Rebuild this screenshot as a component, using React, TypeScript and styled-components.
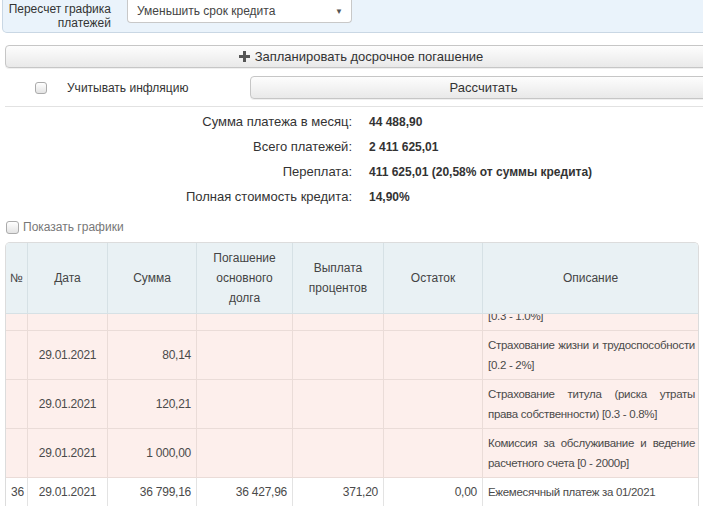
import { Fragment, ReactNode, useLayoutEffect, useRef } from 'react';
import { createGlobalStyle, styled } from 'styled-components';

const GlobalStyle = createGlobalStyle`
    html, body {
        margin: 0;
        overflow: hidden;
        background: #fff;
    }
    body {
        font-family: 'Liberation Sans', Arial, sans-serif;
        font-size: 12px;
        color: #333;
    }
`;

const Page = styled.div`
    width: 717px;
    display: flex;
    flex-direction: column;
`;

const RecalcPanel = styled.div`
    margin-left: 2px;
    height: 33px;
    box-sizing: border-box;
    background: #eaf3fb;
    border: 1px solid #c9d7e4;
    border-top: none;
    border-radius: 0 0 5px 5px;
    display: flex;
    align-items: flex-start;
`;

const RecalcLabel = styled.div`
    width: 108px;
    text-align: right;
    line-height: 14px;
    padding-top: 2px;
    color: #333;
`;

const Select = styled.div`
    margin-left: 16px;
    width: 225px;
    height: 23px;
    box-sizing: border-box;
    background: #fff;
    border: 1px solid #c8c8c8;
    border-top: none;
    border-radius: 0 0 4px 4px;
    display: flex;
    align-items: center;
    justify-content: space-between;
    padding: 0 8px 0 9px;
    color: #444;
`;

const SelectArrow = styled.span`
    font-size: 8px;
    color: #555;
`;

const Button = styled.button`
    box-sizing: border-box;
    height: 23px;
    flex: 1;
    border: 1px solid #c6c6c6;
    border-radius: 4px;
    background: linear-gradient(#fdfdfd, #e9e9e9);
    font-family: inherit;
    font-size: 13px;
    color: #333;
    display: flex;
    align-items: center;
    justify-content: center;
    gap: 5px;
    padding: 0;
    box-shadow: 0 1px 0 #f0f0f0;
`;

const PlanRow = styled.div`
    display: flex;
    margin: 12px 0 0 5px;
`;

const InflationRow = styled.div`
    display: flex;
    align-items: center;
    margin: 3px 0 0 5px;
    padding: 5px 0 7px;
    border-bottom: 1px solid #e2e2e2;
`;

const Check = styled.span<{ $size?: number }>`
    display: inline-block;
    box-sizing: border-box;
    width: ${p => p.$size ?? 12}px;
    height: ${p => p.$size ?? 12}px;
    border: 1px solid #ababab;
    border-radius: 3px;
    background: linear-gradient(#ffffff, #e3e3e3);
    flex: none;
`;

const InflationCheck = styled.label`
    display: flex;
    align-items: center;
    width: 245px;
    padding-left: 30px;
    box-sizing: border-box;
    gap: 20px;
    font-size: 12px;
    color: #333;
`;

const Summary = styled.div`
    display: grid;
    grid-template-columns: 352px auto;
    column-gap: 17px;
    grid-auto-rows: 25px;
    align-items: center;
    margin-top: 2px;
`;

const SummaryLabel = styled.div`
    text-align: right;
    font-size: 13px;
    color: #333;
`;

const SummaryValue = styled.div`
    font-weight: bold;
    color: #333;
`;

const ChartsToggle = styled.label`
    display: flex;
    align-items: center;
    gap: 4px;
    margin: 11px 0 0 6px;
    color: #777;
    font-size: 12px;
`;

const TableWrap = styled.div`
    margin: 8px 0 0 5px;
    width: 694px;
    height: 264px;
    box-sizing: border-box;
    border: 1px solid #dcdcdc;
    border-bottom: none;
    border-radius: 5px 5px 0 0;
    overflow: hidden;
`;

const Table = styled.table`
    width: 692px;
    table-layout: fixed;
    border-collapse: separate;
    border-spacing: 0;
    color: #4a4a4a;
`;

const Th = styled.th`
    position: sticky;
    top: 0;
    z-index: 1;
    box-sizing: border-box;
    background: #e9f1f4;
    border-right: 1px solid #d6e1e5;
    border-bottom: 1px solid #d6e1e5;
    font-weight: normal;
    line-height: 20px;
    height: 71px;
    padding: 0 4px;
    text-align: center;
    color: #444;
    &:last-child {
        border-right: none;
    }
`;

const Tr = styled.tr<{ $extra?: boolean }>`
    background: ${p => (p.$extra ? '#fdefec' : '#fff')};
`;

const Td = styled.td<{ $align?: 'left' | 'right' | 'center' }>`
    box-sizing: border-box;
    padding: 4px 5px;
    line-height: 20px;
    letter-spacing: -0.25px;
    text-align: ${p => p.$align ?? 'left'};
    border-right: 1px solid #eadcd8;
    border-bottom: 1px solid #eadcd8;
    vertical-align: middle;
    white-space: nowrap;
    tr:last-child > & {
        border-color: #e3e3e3;
    }
`;

const DescTd = styled(Td)`
    text-align: justify;
    white-space: normal;
    font-size: 11.5px;
    letter-spacing: -0.3px;
    padding-right: 3px;
    border-right: none;
`;

const PlusIcon = () => (
    <svg width="11" height="11" viewBox="0 0 11 11">
        <rect x="4" y="0" width="3" height="11" fill="#555" />
        <rect x="0" y="4" width="11" height="3" fill="#555" />
    </svg>
);

type Row = {
    n?: string;
    date: string;
    sum: string;
    main?: string;
    interest?: string;
    rest?: string;
    desc: ReactNode;
    extra?: boolean;
};

const rows: Row[] = [
    {
        date: '29.01.2021',
        sum: '12 450,00',
        desc: (
            <>
                Страхование имущества (залога)
                <br />
                [0.3 - 1.0%]
            </>
        ),
        extra: true
    },
    { date: '29.01.2021', sum: '80,14', desc: 'Страхование жизни и трудоспособности [0.2 - 2%]', extra: true },
    { date: '29.01.2021', sum: '120,21', desc: 'Страхование титула (риска утраты права собственности) [0.3 - 0.8%]', extra: true },
    { date: '29.01.2021', sum: '1 000,00', desc: 'Комиссия за обслуживание и ведение расчетного счета [0 - 2000р]', extra: true },
    {
        n: '36',
        date: '29.01.2021',
        sum: '36 799,16',
        main: '36 427,96',
        interest: '371,20',
        rest: '0,00',
        desc: 'Ежемесячный платеж за 01/2021'
    }
];

const summary = [
    ['Сумма платежа в месяц:', '44 488,90'],
    ['Всего платежей:', '2 411 625,01'],
    ['Переплата:', '411 625,01 (20,58% от суммы кредита)'],
    ['Полная стоимость кредита:', '14,90%']
];

const colWidths = [22, 80, 89, 96, 91, 99, 215];

export default function App() {
    const scrollRef = useRef<HTMLDivElement>(null);

    useLayoutEffect(() => {
        if (scrollRef.current) scrollRef.current.scrollTop = 32;
    }, []);

    return (
        <Page>
            <GlobalStyle />
            <RecalcPanel>
                <RecalcLabel>
                    Пересчет графика
                    <br />
                    платежей
                </RecalcLabel>
                <Select>
                    Уменьшить срок кредита
                    <SelectArrow>▼</SelectArrow>
                </Select>
            </RecalcPanel>

            <PlanRow>
                <Button>
                    <PlusIcon />
                    Запланировать досрочное погашение
                </Button>
            </PlanRow>

            <InflationRow>
                <InflationCheck>
                    <Check />
                    Учитывать инфляцию
                </InflationCheck>
                <Button>Рассчитать</Button>
            </InflationRow>

            <Summary>
                {summary.map(([label, value]) => (
                    <Fragment key={label}>
                        <SummaryLabel>{label}</SummaryLabel>
                        <SummaryValue>{value}</SummaryValue>
                    </Fragment>
                ))}
            </Summary>

            <ChartsToggle>
                <Check $size={13} />
                Показать графики
            </ChartsToggle>

            <TableWrap ref={scrollRef}>
                <Table>
                    <colgroup>
                        {colWidths.map((w, i) => (
                            <col key={i} style={{ width: w }} />
                        ))}
                    </colgroup>
                    <thead>
                        <tr>
                            <Th>№</Th>
                            <Th>Дата</Th>
                            <Th>Сумма</Th>
                            <Th>
                                Погашение
                                <br />
                                основного
                                <br />
                                долга
                            </Th>
                            <Th>
                                Выплата
                                <br />
                                процентов
                            </Th>
                            <Th>Остаток</Th>
                            <Th>Описание</Th>
                        </tr>
                    </thead>
                    <tbody>
                        {rows.map((r, i) => (
                            <Tr key={i} $extra={r.extra}>
                                <Td $align="center">{r.n}</Td>
                                <Td $align="center">{r.date}</Td>
                                <Td $align="right">{r.sum}</Td>
                                <Td $align="right">{r.main}</Td>
                                <Td $align="right">{r.interest}</Td>
                                <Td $align="right">{r.rest}</Td>
                                <DescTd>{r.desc}</DescTd>
                            </Tr>
                        ))}
                    </tbody>
                </Table>
            </TableWrap>
        </Page>
    );
}
